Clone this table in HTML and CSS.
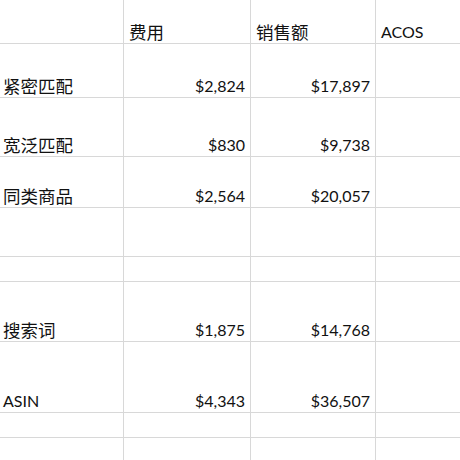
FILE: index.html
```html
<!DOCTYPE html>
<html>
<head>
<meta charset="utf-8">
<link rel="stylesheet" href="styles.css">
</head>
<body>
<div class="sheet">
  <div class="cell r1"></div><div class="cell r1 left"><span class="cjk">费用</span></div><div class="cell r1 left"><span class="cjk">销售额</span></div><div class="cell r1 left last">ACOS</div>
  <div class="cell r2 left"><span class="cjk">紧密匹配</span></div><div class="cell r2 num">$2,824</div><div class="cell r2 num">$17,897</div><div class="cell r2 last"></div>
  <div class="cell r3 left"><span class="cjk">宽泛匹配</span></div><div class="cell r3 num">$830</div><div class="cell r3 num">$9,738</div><div class="cell r3 last"></div>
  <div class="cell r4 left"><span class="cjk">同类商品</span></div><div class="cell r4 num">$2,564</div><div class="cell r4 num">$20,057</div><div class="cell r4 last"></div>
  <div class="cell r5"></div><div class="cell r5"></div><div class="cell r5"></div><div class="cell r5 last"></div>
  <div class="cell r6"></div><div class="cell r6"></div><div class="cell r6"></div><div class="cell r6 last"></div>
  <div class="cell r7 left"><span class="cjk">搜索词</span></div><div class="cell r7 num">$1,875</div><div class="cell r7 num">$14,768</div><div class="cell r7 last"></div>
  <div class="cell r8 left">ASIN</div><div class="cell r8 num">$4,343</div><div class="cell r8 num">$36,507</div><div class="cell r8 last"></div>
  <div class="cell r9"></div><div class="cell r9"></div><div class="cell r9"></div><div class="cell r9 last"></div>
  <div class="cell r10"></div><div class="cell r10"></div><div class="cell r10"></div><div class="cell r10 last"></div>
</div>
</body>
</html>
```
FILE: styles.css
```css
html, body {
  margin: 0;
  padding: 0;
  background: #ffffff;
  overflow: hidden;
}
.sheet {
  display: grid;
  grid-template-columns: 124px 127px 125px 100px;
  grid-template-rows: 44px 54px 59px 51px 49px 25px 60px 71px 25px 40px;
  width: 476px;
  font-family: Lato, "Noto Sans CJK SC", sans-serif;
  font-size: 16px;
  color: #111111;
}
.cell {
  box-sizing: border-box;
  border-right: 1px solid #d8d8d8;
  border-bottom: 1px solid #d8d8d8;
  display: flex;
  align-items: flex-end;
  line-height: 20px;
  padding: 0 5px 1px 5px;
  white-space: nowrap;
}
.cell.last {
  border-right: none;
}
.left {
  justify-content: flex-start;
}
.sheet > .cell:nth-child(4n+1) {
  padding-left: 3px;
}
.num {
  justify-content: flex-end;
}
.cjk {
  font-family: "Noto Sans CJK SC", sans-serif;
  font-size: 17.5px;
  line-height: 20px;
}
```
